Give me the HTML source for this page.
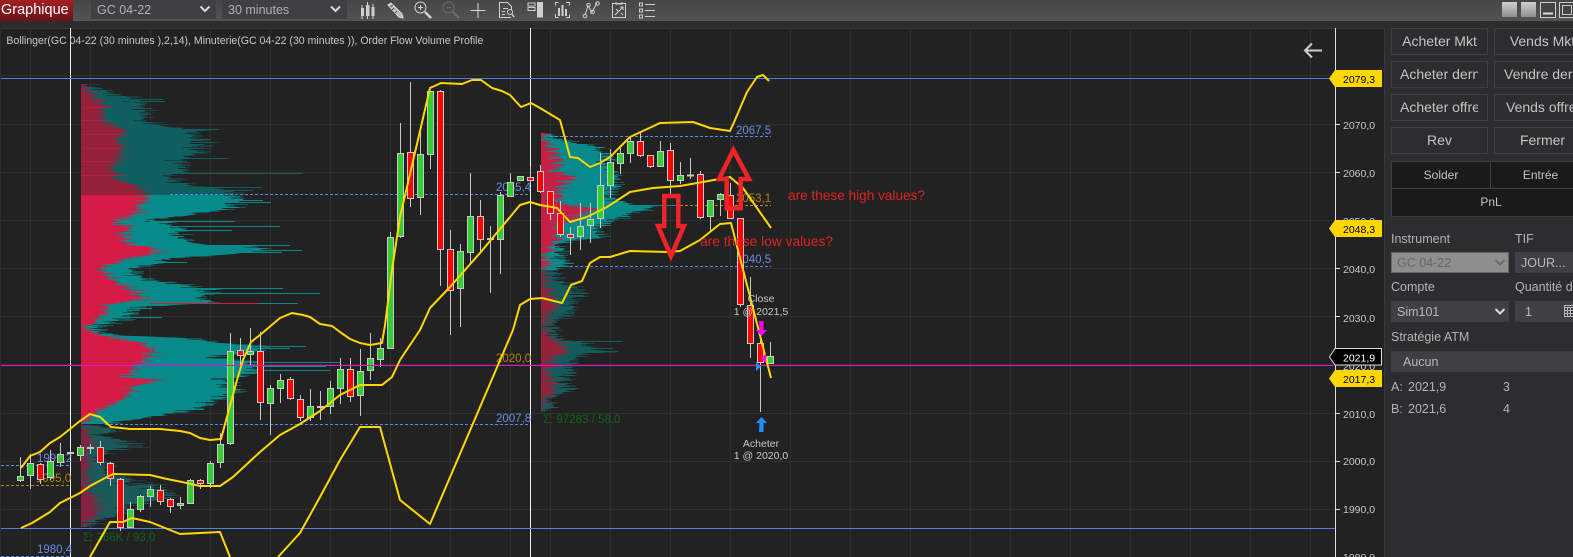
<!DOCTYPE html>
<html><head><meta charset="utf-8"><title>Graphique</title>
<style>
html,body{margin:0;padding:0;background:#2d2d30;width:1573px;height:557px;overflow:hidden}
body{position:relative;font-family:"Liberation Sans",sans-serif;color:#bbb}
.a{position:absolute;white-space:nowrap}
.btn{position:absolute;width:95px;height:25px;border:1px solid #3f3f46;background:#2d2d30;color:#c4c4c4;font-size:14px;line-height:25px;text-align:center;overflow:hidden;white-space:nowrap}
.btn span{position:absolute;left:8px;right:8px;overflow:hidden;text-align:center}
.lb{position:absolute;font-size:12.5px;line-height:15px;color:#b4b4b4;white-space:nowrap}
.box{position:absolute;background:#3f3f46;font-size:13px;color:#b8b8b8;white-space:nowrap;overflow:hidden}
.cell{position:absolute;background:#1a1a1a;border:1px solid #3f3f46;box-sizing:border-box;font-size:12px;color:#c4c4c4;text-align:center;line-height:26px}
svg{position:absolute;left:0;top:0}
svg text{font-family:"Liberation Sans",sans-serif}
</style></head><body>
<div class="a" style="left:0;top:0;width:1573px;height:21px;background:linear-gradient(180deg,#464646,#535353)"></div>
<div class="a" style="left:0;top:0;width:73px;height:21px;background:linear-gradient(180deg,#a31f24,#6b1418);color:#fff;font-size:14.5px;line-height:20px;text-indent:1px">Graphique</div>
<div class="box" style="left:91px;top:0;width:125px;height:19px;line-height:20px;font-size:12.5px;text-indent:6px;color:#b0b0b0">GC 04-22</div>
<div class="box" style="left:222px;top:0;width:125px;height:19px;line-height:20px;font-size:12.5px;text-indent:6px;color:#b0b0b0">30 minutes</div>

<svg width="1573" height="557" viewBox="0 0 1573 557">
<defs>
<linearGradient id="wb" x1="0" y1="0" x2="0" y2="1"><stop offset="0" stop-color="#cfcfcf"/><stop offset="1" stop-color="#8f8f8f"/></linearGradient>
<filter id="j1" filterUnits="userSpaceOnUse" x="0" y="0" width="1573" height="557" color-interpolation-filters="sRGB"><feTurbulence type="fractalNoise" baseFrequency="0.0005 0.85" numOctaves="2" seed="3"/><feColorMatrix type="matrix" values="1 0 0 0 0 0 0 0 0 .5 0 0 0 0 0 0 0 0 0 1" result="n"/><feDisplacementMap in="SourceGraphic" in2="n" scale="70" xChannelSelector="R" yChannelSelector="G"/></filter>
<filter id="j2" filterUnits="userSpaceOnUse" x="0" y="0" width="1573" height="557" color-interpolation-filters="sRGB"><feTurbulence type="fractalNoise" baseFrequency="0.0005 0.9" numOctaves="2" seed="11"/><feColorMatrix type="matrix" values="1 0 0 0 0 0 0 0 0 .5 0 0 0 0 0 0 0 0 0 1" result="n"/><feDisplacementMap in="SourceGraphic" in2="n" scale="45" xChannelSelector="R" yChannelSelector="G"/></filter>
<filter id="j3" filterUnits="userSpaceOnUse" x="0" y="0" width="1573" height="557" color-interpolation-filters="sRGB"><feTurbulence type="fractalNoise" baseFrequency="0.0005 0.9" numOctaves="2" seed="23"/><feColorMatrix type="matrix" values="1 0 0 0 0 0 0 0 0 .5 0 0 0 0 0 0 0 0 0 1" result="n"/><feDisplacementMap in="SourceGraphic" in2="n" scale="38" xChannelSelector="R" yChannelSelector="G"/></filter>
<clipPath id="c1"><rect x="81" y="80" width="400" height="450"/></clipPath>
<clipPath id="c2"><rect x="541" y="130" width="200" height="285"/></clipPath>
</defs>
<!-- dropdown chevrons -->
<path d="M200.5 6.5l4.5 4.5 4.5-4.5M331 6.5l4.5 4.5 4.5-4.5" fill="none" stroke="#d8d8d8" stroke-width="2"/>
<!-- toolbar icons -->
<g fill="#cfcfcf" stroke="none">
<path d="M362 5v3M367.5 2v3M373 4v3M362 16v3M367.5 16v3M373 16v3" stroke="#cfcfcf" fill="none"/>
<rect x="361" y="8" width="3" height="8"/><rect x="366" y="5" width="3.5" height="11"/><rect x="371.5" y="7" width="3" height="9"/>
</g>
<path d="M388 5l3-2 11 11 1 4-4-1z" fill="#bbb" stroke="#e0e0e0" stroke-width="1"/>
<path d="M390 7l3-2M394 8l-2 2M397 11l-2 2" stroke="#555" fill="none"/>
<g fill="none" stroke="#d0d0d0"><circle cx="420.5" cy="7.5" r="5.5"/><path d="M418 7.5h5M420.5 5v5"/><path d="M425 12l6 6" stroke-width="2.5"/></g>
<g fill="none" stroke="#6c6c6c"><circle cx="448.5" cy="7.5" r="5.5"/><path d="M446 7.5h5"/><path d="M453 12l6 6" stroke-width="2.5"/></g>
<path d="M470.5 10.500h15M478 3v15" stroke="#d8d8d8" fill="none"/>
<g fill="none" stroke="#cfcfcf"><path d="M511 17.500h-11.500v-15h8l4 4v3M503 8.500h5M502 11.500h3M502 14.500h3"/><circle cx="510" cy="12" r="2.500"/><path d="M512 14l2 3" stroke-width="1.500"/></g>
<g fill="none" stroke="#cfcfcf"><rect x="528" y="3" width="7" height="3"/><rect x="528" y="7.500" width="7" height="3"/></g><rect x="537" y="2" width="6" height="15.500" fill="#cfcfcf"/>
<g fill="none" stroke="#cfcfcf"><path d="M555.500 5.500v-3h3M566 2.500h3.500v3M555.500 14v3.500h3M566 17.500h3.500v-3"/></g><path d="M558 8h2v8h-2zM561.500 5h2v11h-2zM565 9h2v7h-2z" fill="#cfcfcf"/>
<g fill="none" stroke="#cfcfcf"><path d="M585 15l3-9 4 6 5-9"/><circle cx="585" cy="16" r="1.800"/><circle cx="588.500" cy="5" r="1.800"/><circle cx="592.500" cy="12" r="1.800"/><circle cx="597.500" cy="3.500" r="1.800"/></g>
<g fill="none" stroke="#cfcfcf"><rect x="612.500" y="3.500" width="13" height="14"/><path d="M616 2v2h6V2M615 15l8-8M620 7h3v3M616 9l2 2M621 13l2 2"/></g>
<g fill="none" stroke="#cfcfcf"><rect x="639.500" y="3" width="3" height="3"/><rect x="639.500" y="9" width="3" height="3"/><rect x="639.500" y="15" width="3" height="3"/><path d="M645 4.500h10M645 10.500h10M645 16.500h10"/></g>
<!-- window buttons -->
<rect x="1502" y="2" width="15" height="15" fill="url(#wb)"/><rect x="1521" y="2" width="15" height="15" fill="url(#wb)"/>
<rect x="1540.500" y="2.500" width="15" height="15" fill="#444" stroke="#ccc"/><path d="M1543 13.500h10" stroke="#ddd" stroke-width="2"/>
<rect x="1559.500" y="2.500" width="15" height="15" fill="#444" stroke="#ccc"/><rect x="1562.500" y="5.500" width="9" height="9" fill="none" stroke="#ccc"/>

<!-- chart panel -->
<rect x="1" y="28" width="1383" height="529" fill="#222" />
<path d="M1 28.500H1384.500V557" fill="none" stroke="#3a3a3d"/>
<!-- grid -->
<path d="M30.500 28V557M90.500 28V557M150.500 28V557M210.500 28V557M270.500 28V557M330.500 28V557M390.500 28V557M450.500 28V557M510.500 28V557M550.500 28V557M610.500 28V557M670.500 28V557M730.500 28V557M790.500 28V557M850.500 28V557M910.500 28V557M970.500 28V557M1010.500 28V557M1070.500 28V557M1130.500 28V557M1190.500 28V557M1250.500 28V557M1310.500 28V557M1 75.500H1336M1 124.500H1336M1 172.500H1336M1 220.500H1336M1 268.500H1336M1 316.500H1336M1 364.500H1336M1 413.500H1336M1 461.500H1336M1 509.500H1336" stroke="#303030" fill="none"/>

<!-- profile 1 -->
<g clip-path="url(#c1)">
<g filter="url(#j1)">
<path fill="#0f5f60" d="M50 83H81L107 92L125 96L137 100L147 113L142 122L193 130L200 140L200 153L183 160L187 172L167 177L180 183L220 190L237 195H50Z"/>
<path fill="#078a8a" d="M237 195L243 200L230 208L187 215L153 220L180 227L180 235L187 243L250 247L277 250L223 255L170 258L157 263L130 270L147 280L187 285L210 290L203 297L220 303L133 307L133 317L103 325L97 330L113 335L187 338L210 342L265 346L250 353L205 358L255 361L255 374L225 378L235 392L195 410L150 417L103 424H50V195Z"/>
<path fill="#1a5a5a" d="M50 424H81L115 428L100 436L125 440L135 447L105 452L98 460L110 465L105 472L130 478L125 487L150 482L172 498L130 505L118 515L100 520L90 527H50Z"/>
</g>
<g filter="url(#j2)">
<path fill="#97203a" d="M50 83H81L90 93L103 103L102 113L103 123L127 130L117 137L123 150L113 167L112 177L137 187L147 195H50Z"/>
<path fill="#d61c44" d="M147 195L142 203L137 213L113 223L133 227L123 233L127 243L153 248L160 253L130 258L100 268L113 280L133 290L143 300L107 304L105 313L93 323L83 328L100 335L140 343L153 350L147 357L137 367L123 377L160 380L133 387L127 397L100 410L90 417L82 424H50V195Z"/>
<path fill="#8a2040" d="M50 424H81L88 432L92 445L85 455L90 465L84 472L88 485L92 495L100 510L90 520L82 527H50Z"/>
</g>
<path fill="none" stroke="#0f5f60" d="M130 99.500H163M130 101.500H165M150 129.500H219M150 139.500H210M150 148.500H202M150 158.500H228M150 173.500H303M150 187.500H262M150 190.500H253"/>
<path fill="none" stroke="#078a8a" d="M150 200.500H263M150 202.500H271M150 221.500H235M150 226.500H280M150 230.500H232M150 245.500H290M150 250.500H302M150 252.500H282M130 262.500H187M150 288.500H283M150 293.500H320M150 303.500H298M110 308.500H152M110 317.500H162M200 346.500H306M200 348.500H290M200 362.500H340M200 366.500H326M200 370.500H330"/>
<path fill="none" stroke="#d61c44" d="M150 303.500H258"/>
<path fill="none" stroke="#b01f40" d="M81 107.500H110M81 120.500H110M81 134.500H125M81 148.500H120M81 161.500H115M81 175.500H125"/>
</g>
<!-- profile 2 -->
<g clip-path="url(#c2)">
<g filter="url(#j2)">
<path fill="#078a8a" d="M510 133H541L557 138L577 143L600 148L607 153L607 163L615 173L617 187L610 197L633 205L665 206L633 212L620 218L600 227L603 237L563 243L560 253L570 265L553 270H510Z"/>
<path fill="#145b5c" d="M510 270H553L560 280L570 283L580 293L573 303L570 313L553 323L553 337L573 342L593 347L600 352L573 357L573 367L563 377L573 387L563 393L547 400L553 408L542 412H510Z"/>
</g>
<g filter="url(#j3)">
<path fill="#c81f45" d="M510 133H541L547 140L553 150L558 160L557 170L570 177L563 185L560 193L558 203L587 208L600 207L563 223L560 237L550 247L547 260L543 270H510Z"/>
<path fill="#97203a" d="M510 270H545L547 290L550 297L553 307L547 317L543 327L547 337L563 343L567 352L553 357L550 367L550 377L553 387L547 397L542 410H510Z"/>
</g>
<path fill="none" stroke="#145b5c" d="M555 293.500H588M570 341.500H623M570 348.500H613M570 351.500H618M555 388.500H578"/>
<path fill="none" stroke="#078a8a" d="M590 205.500H680"/>
</g>

<!-- white verticals -->
<path d="M70.500 28V557M530.500 28V557" stroke="#f0f0f0" fill="none"/>
<!-- level lines -->
<path d="M1 78.500H1332M1 528.500H1336" stroke="#4f80e0" fill="none"/>
<g fill="none" stroke-dasharray="3 2">
<path d="M170 194.500H530M105 424.500H530M550 136.500H771M570 266.500H771M1 465.500H70M1 556.500H70" stroke="#5b8ae0"/>
<path d="M680 205.500H771M1 485.500H70" stroke="#b8860b"/>
</g>
<!-- level labels -->
<g font-size="11.500">
<g fill="#648ee4">
<text x="37" y="462">1999,2</text><text x="37" y="553">1980,4</text><text x="496" y="422">2007,8</text><text x="496" y="191">2055,4</text><text x="736" y="134">2067,5</text><text x="736" y="263">2040,5</text>
</g>
<g fill="#b0820f">
<text x="36" y="482">1995,0</text><text x="496" y="362">2020,0</text><text x="736" y="202">2053,1</text>
</g>
<g fill="#0f650f"><text x="83" y="541">Σ: 366K / 93,0</text><text x="543" y="423">Σ: 97283 / 58,0</text></g>
</g>
<!-- candle wicks -->
<path fill="none" stroke="#c8c8c8" d="M20.500 457V482M30.500 454V489M40.500 463V484M50.500 450V480M60.500 443V467M70.500 450V458M80.500 445V461M90.500 444V454M100.500 441V465M110.500 462V486M120.500 478V531M130.500 502V528M140.500 495V512M150.500 486V507M160.500 485V505M170.500 498V513M180.500 497V509M190.500 479V504M200.500 479V489M210.500 461V488M220.500 433V468M230.500 333V445M240.500 338V365M250.500 328V365M260.500 332V420M270.500 385V435M280.500 374V403M290.500 377V400M300.500 395V421M310.500 389V421M320.500 391V420M330.500 381V414M340.500 358V404M350.500 358V402M360.500 349V416M370.500 333V380M380.500 338V367M390.500 232V349M400.500 123V238M410.500 82V207M420.500 128V215M430.500 91V169M440.500 90V286M450.500 230V335M460.500 244V327M470.500 173V263M480.500 200V254M490.500 226V293M500.500 192V274M510.500 173V197M530.500 167V185M540.500 165V193M550.500 191V220M560.500 201V237M570.500 227V255M580.500 203V250M590.500 203V243M600.500 153V228M610.500 149V198M620.500 148V174M630.500 136V163M640.500 132V157M650.500 155V168M660.500 141V167M670.500 143V195M680.500 162V184M690.500 158V179M700.500 171V219M710.500 200V232M720.500 193V216M730.500 183V219M740.500 218V307M750.500 277V358M760.500 340V412M770.500 342V364"/>
<path fill="none" stroke="#c8c8c8" stroke-width="2" d="M67 453H74M87 448H94M317 407H324M487 239H494M687 175.500H694"/>
<!-- green bodies -->
<path fill="#32cd32" stroke="#c8c8c8" d="M17.500 476.500h6v4h-6zM27.500 463.500h6v12h-6zM47.500 461.500h6v16h-6zM57.500 454.500h6v8h-6zM77.500 447.500h6v8h-6zM127.500 509.500h6v18h-6zM137.500 496.500h6v13h-6zM147.500 489.500h6v7h-6zM177.500 503.500h6v2h-6zM187.500 480.500h6v23h-6zM207.500 463.500h6v20h-6zM217.500 444.500h6v18h-6zM227.500 351.500h6v92h-6zM247.500 351.500h6v3h-6zM267.500 388.500h6v15h-6zM277.500 380.500h6v8h-6zM307.500 406.500h6v11h-6zM327.500 388.500h6v18h-6zM337.500 369.500h6v19h-6zM357.500 371.500h6v24h-6zM367.500 358.500h6v12h-6zM377.500 348.500h6v11h-6zM387.500 237.500h6v111h-6zM397.500 153.500h6v83h-6zM417.500 154.500h6v43h-6zM427.500 91.500h6v63h-6zM457.500 251.500h6v37h-6zM467.500 216.500h6v36h-6zM497.500 195.500h6v44h-6zM507.500 182.500h6v14h-6zM517.500 176.500h6v4h-6zM577.500 226.500h6v10h-6zM587.500 219.500h6v6h-6zM597.500 185.500h6v33h-6zM607.500 162.500h6v23h-6zM617.500 153.500h6v10h-6zM627.500 141.500h6v12h-6zM657.500 151.500h6v15h-6zM677.500 175.500h6v5h-6zM707.500 200.500h6v16h-6zM717.500 194.500h6v5h-6zM767.500 356.500h6v7h-6z"/>
<!-- red bodies -->
<path fill="#f00" stroke="#c8c8c8" d="M37.500 464.500h6v15h-6zM97.500 447.500h6v15h-6zM107.500 463.500h6v15h-6zM117.500 479.500h6v48h-6zM157.500 490.500h6v11h-6zM167.500 499.500h6v7h-6zM197.500 480.500h6v3h-6zM237.500 350.500h6v5h-6zM257.500 351.500h6v51h-6zM287.500 379.500h6v19h-6zM297.500 399.500h6v18h-6zM347.500 369.500h6v27h-6zM407.500 152.500h6v46h-6zM437.500 91.500h6v158h-6zM447.500 249.500h6v41h-6zM477.500 216.500h6v23h-6zM527.500 177.500h6v3h-6zM537.500 171.500h6v20h-6zM547.500 191.500h6v22h-6zM557.500 213.500h6v21h-6zM567.500 234.500h6v3h-6zM637.500 141.500h6v14h-6zM647.500 155.500h6v11h-6zM667.500 150.500h6v30h-6zM697.500 174.500h6v43h-6zM727.500 195.500h6v23h-6zM737.500 218.500h6v86h-6zM747.500 305.500h6v38h-6zM757.500 343.500h6v19h-6z"/>
<!-- magenta -->
<path d="M1 365.500H1333" stroke="#e80ce0" stroke-width="1" fill="none"/>
<!-- bollinger -->
<g fill="none" stroke="#ffd700" stroke-width="2" stroke-linejoin="round">
<path d="M21 468L30 456L40 452L50 443L60 437L70 429L80 421L90 414L100 417L111 427L130 429L160 429L180 431L190 433L200 438L210 440L221 439L237 380L243 360L251 342L260 335L280 318L292 313L303 315L310 317L320 324L332 326L340 332L350 339L360 343L370 345L382 343L385 325L392 270L400 217L430 88L441 83L462 84L472 80L481 80L492 88L502 91L510 95L521 107L531 103L540 108L560 120L570 157L578 158L590 167L600 163L610 157L630 137L660 123L693 122L710 128L730 131L735 120L747 92L757 77L763 75L769 81"/>
<path d="M21 528L32 523L50 512L60 503L80 493L90 486L107 477L113 474L150 475L167 479L187 483L200 486L220 486L233 477L260 452L280 435L300 424L320 411L340 395L360 385L382 385L392 377L400 360L420 330L430 308L450 287L480 253L520 205L530 202L540 205L557 208L570 222L587 217L607 207L630 192L653 188L680 186L703 182L730 177L743 188L771 228"/>
<path d="M90 557L110 522L123 522L132 518L150 522L180 534L220 532L230 557M278 557L300 533L320 497L340 460L360 427L380 427L400 500L430 524L513 330L520 305L530 299L542 298L562 303L571 285L582 281L590 263L600 257L610 257L630 251L667 252L680 251L700 240L720 224L731 223L771 378"/>
</g>
<!-- annotation arrows -->
<g fill="none" stroke="#ee2428" stroke-width="4.500" stroke-linejoin="miter">
<path d="M664.300 196H678.300V226H684L671 256L658 226H664.300Z"/>
<path d="M733.300 150L749 179H740.700V208.300H726.700V179H719Z"/>
</g>
<g font-size="14" fill="#e02222">
<text x="788" y="200" textLength="137" lengthAdjust="spacingAndGlyphs">are these high values?</text>
<text x="700" y="246" textLength="133" lengthAdjust="spacingAndGlyphs">are these low values?</text>
</g>
<!-- trade markers -->
<path d="M759 321h4.500v9h3.500l-5.500 6-5.500-6h3.500z" fill="#ff00ff"/>
<path d="M759 432h4.500v-9h3.500l-5.500-6-5.500 6h3.500z" fill="#1e90ff"/>
<path d="M756 362l5 4.500-5 4.500z" fill="#1e90ff"/>
<path d="M766 354l-5 4.500 5 4.500z" fill="#ff00ff"/>
<g font-size="10.500" fill="#c8c8c8" text-anchor="middle">
<text x="761" y="302">Close</text><text x="761" y="315">1 @ 2021,5</text>
<text x="761" y="447">Acheter</text><text x="761" y="459">1 @ 2020,0</text>
</g>
<!-- back arrow -->
<path d="M1322 50.500H1305.500M1312 43.500l-7 7 7 7" fill="none" stroke="#cfcfcf" stroke-width="2"/>
<!-- top legend -->
<text x="6.400" y="44" font-size="11" fill="#c8c8c8" textLength="477" lengthAdjust="spacingAndGlyphs">Bollinger(GC 04-22 (30 minutes ),2,14), Minuterie(GC 04-22 (30 minutes )), Order Flow Volume Profile</text>
<!-- price axis -->
<g transform="translate(-1 0)">
<path d="M1336.500 28V557" stroke="#e0e0e0" fill="none"/>
<path d="M1337 124.500h4M1337 172.500h4M1337 220.500h4M1337 268.500h4M1337 316.500h4M1337 413.500h4M1337 461.500h4M1337 509.500h4" stroke="#ddd" fill="none"/>
<g font-size="10.500" fill="#c8c8c8">
<text x="1344" y="129">2070,0</text><text x="1344" y="177">2060,0</text><text x="1344" y="225">2050,0</text><text x="1344" y="273">2040,0</text><text x="1344" y="322">2030,0</text><text x="1344" y="370">2020,0</text><text x="1344" y="418">2010,0</text><text x="1344" y="465">2000,0</text><text x="1344" y="513">1990,0</text><text x="1344" y="561">1980,0</text>
</g>
<path d="M1330 78.500L1336 70H1383V87H1336Z" fill="#ffd700"/>
<path d="M1330 228.500L1336 220H1383V237H1336Z" fill="#ffd700"/>
<path d="M1330 378.500L1336 370H1383V387H1336Z" fill="#ffd700"/>
<path d="M1330.500 357L1336 348.500H1382.500V365H1336Z" fill="#000" stroke="#ddd" stroke-width="1"/>
<g font-size="10.500" fill="#000">
<text x="1344" y="83">2079,3</text><text x="1344" y="233">2048,3</text><text x="1344" y="383">2017,3</text>
<text x="1344" y="361.500" fill="#fff">2021,9</text>
</g>
</g>
</svg>

<!-- right panel buttons -->
<div class="btn" style="left:1391px;top:28px"><span>Acheter Mkt</span></div>
<div class="btn" style="left:1494px;top:28px"><span style="overflow:visible">Vends Mkt</span></div>
<div class="btn" style="left:1391px;top:61px"><span style="left:8px;right:9px;text-align:left">Acheter dernier</span></div>
<div class="btn" style="left:1494px;top:61px"><span style="left:9px;right:9px;text-align:left">Vendre dernier</span></div>
<div class="btn" style="left:1391px;top:94px"><span style="left:8px;right:9px;text-align:left">Acheter offre</span></div>
<div class="btn" style="left:1494px;top:94px"><span style="left:11px;right:9px;text-align:left">Vends offre</span></div>
<div class="btn" style="left:1391px;top:127px"><span>Rev</span></div>
<div class="btn" style="left:1494px;top:127px"><span>Fermer</span></div>
<div class="cell" style="left:1391px;top:161px;width:100px;height:28px">Solder</div>
<div class="cell" style="left:1490px;top:161px;width:101px;height:28px">Entrée</div>
<div class="cell" style="left:1391px;top:188px;width:200px;height:29px">PnL</div>

<div class="lb" style="left:1391px;top:232px">Instrument</div>
<div class="lb" style="left:1515px;top:232px">TIF</div>
<div class="box" style="left:1391px;top:252px;width:116px;height:19px;background:#8e8e8e;border:1px solid #666;line-height:20px;color:#666;text-indent:5px;font-size:12.500px">GC 04-22</div>
<div class="box" style="left:1515px;top:252px;width:58px;height:21px;line-height:22px;text-indent:6px;font-size:12.500px">JOUR...</div>
<div class="lb" style="left:1391px;top:280px">Compte</div>
<div class="lb" style="left:1515px;top:280px">Quantité d'ordre</div>
<div class="box" style="left:1391px;top:301px;width:118px;height:21px;line-height:22px;text-indent:6px;font-size:12.500px">Sim101</div>
<div class="box" style="left:1515px;top:301px;width:58px;height:21px;line-height:22px;text-indent:10px;font-size:12.500px">1</div>
<div class="lb" style="left:1391px;top:330px">Stratégie ATM</div>
<div class="box" style="left:1391px;top:351px;width:182px;height:21px;line-height:22px;text-indent:12px;font-size:12.500px">Aucun</div>
<div class="lb" style="left:1391px;top:380px">A:</div><div class="lb" style="left:1408px;top:380px">2021,9</div><div class="lb" style="left:1503px;top:380px">3</div>
<div class="lb" style="left:1391px;top:402px">B:</div><div class="lb" style="left:1408px;top:402px">2021,6</div><div class="lb" style="left:1503px;top:402px">4</div>

<svg width="1573" height="557" viewBox="0 0 1573 557" style="pointer-events:none">
<path d="M1495.500 260l4.500 4.500 4.500-4.500" fill="none" stroke="#6a6a6a" stroke-width="2"/>
<path d="M1495.500 309l4.500 4.500 4.500-4.500" fill="none" stroke="#dcdcdc" stroke-width="2"/>
<path d="M1564 305.500h9M1564 307.500h9M1564 310.500h9M1564 313.500h9M1564 316.500h9M1564.500 305v12M1567.500 307v10M1570.500 307v10" stroke="#b8b8b8" fill="none"/>
</svg>
</body></html>
